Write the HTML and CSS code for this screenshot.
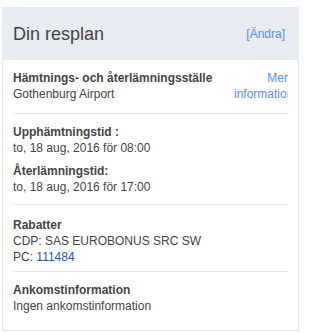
FILE: index.html
```html
<!DOCTYPE html>
<html lang="sv">
<head>
    <meta charset="UTF-8">
    <meta name="viewport" content="width=device-width, initial-scale=1.0">
    <title>Din resplan</title>
    <link rel="stylesheet" href="styles.css">
</head>
<body>
    <div class="card">
        <div class="card-header">
            <h2>Din resplan</h2>
            <a href="#" class="edit-link">[Ändra]</a>
        </div>
        <div class="card-body">
            <div class="section location">
                <div class="location-text">
                    <p class="label">Hämtnings- och återlämningsställe</p>
                    <p>Gothenburg Airport</p>
                </div>
                <a href="#" class="more-info">Mer information</a>
            </div>
            <div class="section times">
                <p class="label">Upphämtningstid :</p>
                <p>to, 18 aug, 2016 för 08:00</p>
                <p class="label second">Återlämningstid:</p>
                <p>to, 18 aug, 2016 för 17:00</p>
            </div>
            <div class="section discounts">
                <p class="label">Rabatter</p>
                <p>CDP: SAS EUROBONUS SRC SW</p>
                <p>PC: <span class="code">111484</span></p>
            </div>
            <div class="section last">
                <p class="label">Ankomstinformation</p>
                <p>Ingen ankomstinformation</p>
            </div>
        </div>
    </div>
</body>
</html>
```

FILE: styles.css
```css
body {
    margin: 0;
    padding: 7px 0 0 2px;
    font-family: "Liberation Sans", Arial, sans-serif;
    font-size: 12px;
    color: #444;
    background-color: #ffffff;
}

.card {
    width: 297px;
}

.card-header {
    display: flex;
    justify-content: space-between;
    align-items: center;
    background-color: #e8ebf2;
    height: 53px;
    padding: 0 14px 0 11px;
}

.card-header h2 {
    margin: 0;
    font-size: 18px;
    font-weight: normal;
    color: #444;
    padding-top: 2px;
}

.edit-link {
    color: #5a8ef0;
    text-decoration: none;
    font-size: 12px;
}

.card-body {
    border: 1px solid #e6e6e6;
    border-top: none;
    padding: 0 10px 0 10px;
    height: 270px;
}

.section {
    border-bottom: 1px solid #e6e6e6;
    padding: 10px 0 11px 0;
}

.section.times {
    padding-bottom: 9px;
}

.section.discounts {
    padding: 12px 0 6px 0;
}

.section.last {
    border-bottom: none;
}

.section p {
    margin: 0;
    line-height: 16px;
}

.section .label {
    font-weight: bold;
    color: #444;
}

.section .label.second {
    margin-top: 7px;
}

.location {
    display: flex;
    justify-content: space-between;
    align-items: flex-start;
}

.more-info {
    width: 54px;
    overflow: hidden;
    text-align: right;
    color: #5a8ef0;
    text-decoration: none;
    line-height: 16px;
}

.code {
    color: #2b5797;
}
```
